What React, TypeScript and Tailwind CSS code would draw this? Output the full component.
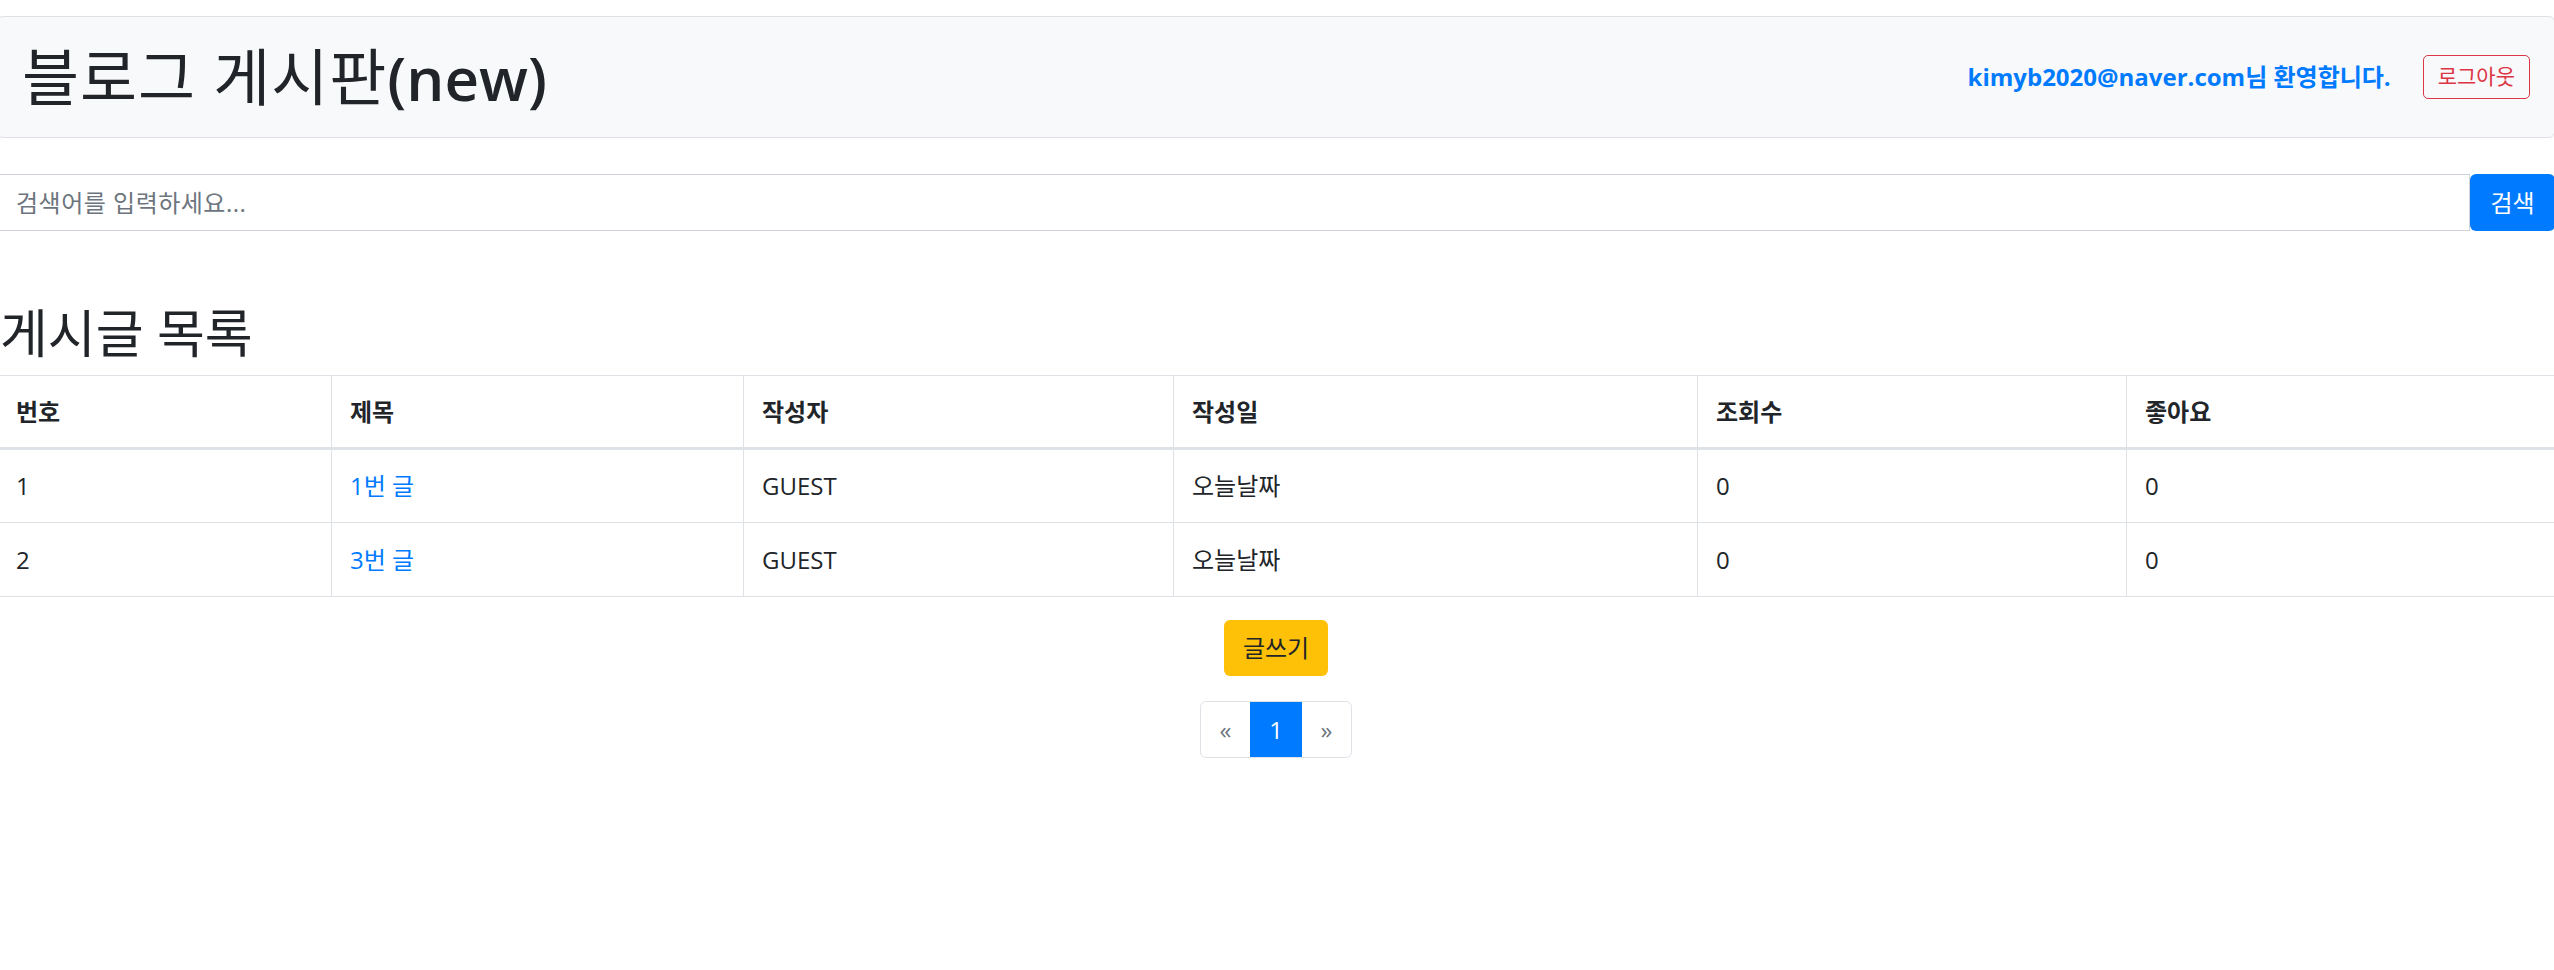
import React from "react";

const posts = [
  { no: 1, title: "1번 글", writer: "GUEST", date: "오늘날짜", views: 0, likes: 0 },
  { no: 2, title: "3번 글", writer: "GUEST", date: "오늘날짜", views: 0, likes: 0 },
];

const App = () => {
  return (
    <div
      className="w-full min-h-screen overflow-hidden bg-white text-[#212529]"
      style={{ fontFamily: '"Open Sans", "Noto Sans CJK KR", sans-serif' }}
    >
      <div className="-ml-[3px] w-[calc(100%+4px)]">
        {/* header */}
        <nav className="mt-4 flex h-[122px] items-center justify-between rounded-[6px] border border-[#dee2e6] bg-[#f8f9fa] px-6">
          <h1 className="text-[62px] leading-[72px] font-normal tracking-[1px]">
            블로그 게시판<span className="text-[60px] font-semibold tracking-normal">(new)</span>
          </h1>
          <div className="flex items-center gap-8">
            <span className="text-[24px] font-bold text-[#007bff]">kimyb2020@naver.com님 환영합니다.</span>
            <button className="h-[44px] rounded-[5px] border border-[#dc3545] px-[14px] text-[21px] text-[#dc3545]">
              로그아웃
            </button>
          </div>
        </nav>

        {/* search */}
        <div className="mt-9 flex h-[57px]">
          <input
            className="h-full flex-1 border border-[#ced4da] px-[18px] text-[24px] tracking-[0.5px] outline-none placeholder:text-[#6c757d]"
            placeholder="검색어를 입력하세요..."
          />
          <button className="h-full w-[85px] rounded-[6px] bg-[#007bff] text-[24px] text-white">검색</button>
        </div>

        {/* list */}
        <h2 className="mt-[72px] mb-3 pl-[3px] text-[52px] leading-[60px] font-normal">게시글 목록</h2>
        <table className="w-full border-collapse text-left text-[24px]">
          <thead>
            <tr className="h-[73px]">
              <th className="w-[334px] border border-b-[3px] border-[#dee2e6] px-[18px] font-bold">번호</th>
              <th className="w-[412px] border border-b-[3px] border-[#dee2e6] px-[18px] font-bold">제목</th>
              <th className="w-[430px] border border-b-[3px] border-[#dee2e6] px-[18px] font-bold">작성자</th>
              <th className="w-[524px] border border-b-[3px] border-[#dee2e6] px-[18px] font-bold">작성일</th>
              <th className="w-[429px] border border-b-[3px] border-[#dee2e6] px-[18px] font-bold">조회수</th>
              <th className="border border-b-[3px] border-[#dee2e6] px-[18px] font-bold">좋아요</th>
            </tr>
          </thead>
          <tbody>
            {posts.map((p) => (
              <tr key={p.no} className="h-[74px]">
                <td className="border border-[#dee2e6] px-[18px]">{p.no}</td>
                <td className="border border-[#dee2e6] px-[18px]">
                  <a href="#" className="text-[#007bff]">{p.title}</a>
                </td>
                <td className="border border-[#dee2e6] px-[18px]">{p.writer}</td>
                <td className="border border-[#dee2e6] px-[18px]">{p.date}</td>
                <td className="border border-[#dee2e6] px-[18px]">{p.views}</td>
                <td className="border border-[#dee2e6] px-[18px]">{p.likes}</td>
              </tr>
            ))}
          </tbody>
        </table>

        <div className="mt-[23px] flex justify-center">
          <button className="h-[56px] rounded-[6px] bg-[#ffc107] px-[19px] text-[24px] text-[#212529]">글쓰기</button>
        </div>

        <div className="mt-[25px] flex justify-center">
          <ul className="flex h-[57px] overflow-hidden rounded-[6px] border border-[#dee2e6] text-[24px]">
            <li className="flex w-[49px] items-center justify-center text-[#6c757d]">«</li>
            <li className="flex w-[52px] items-center justify-center bg-[#007bff] text-white">1</li>
            <li className="flex w-[49px] items-center justify-center text-[#6c757d]">»</li>
          </ul>
        </div>
      </div>
    </div>
  );
};

export default App;
